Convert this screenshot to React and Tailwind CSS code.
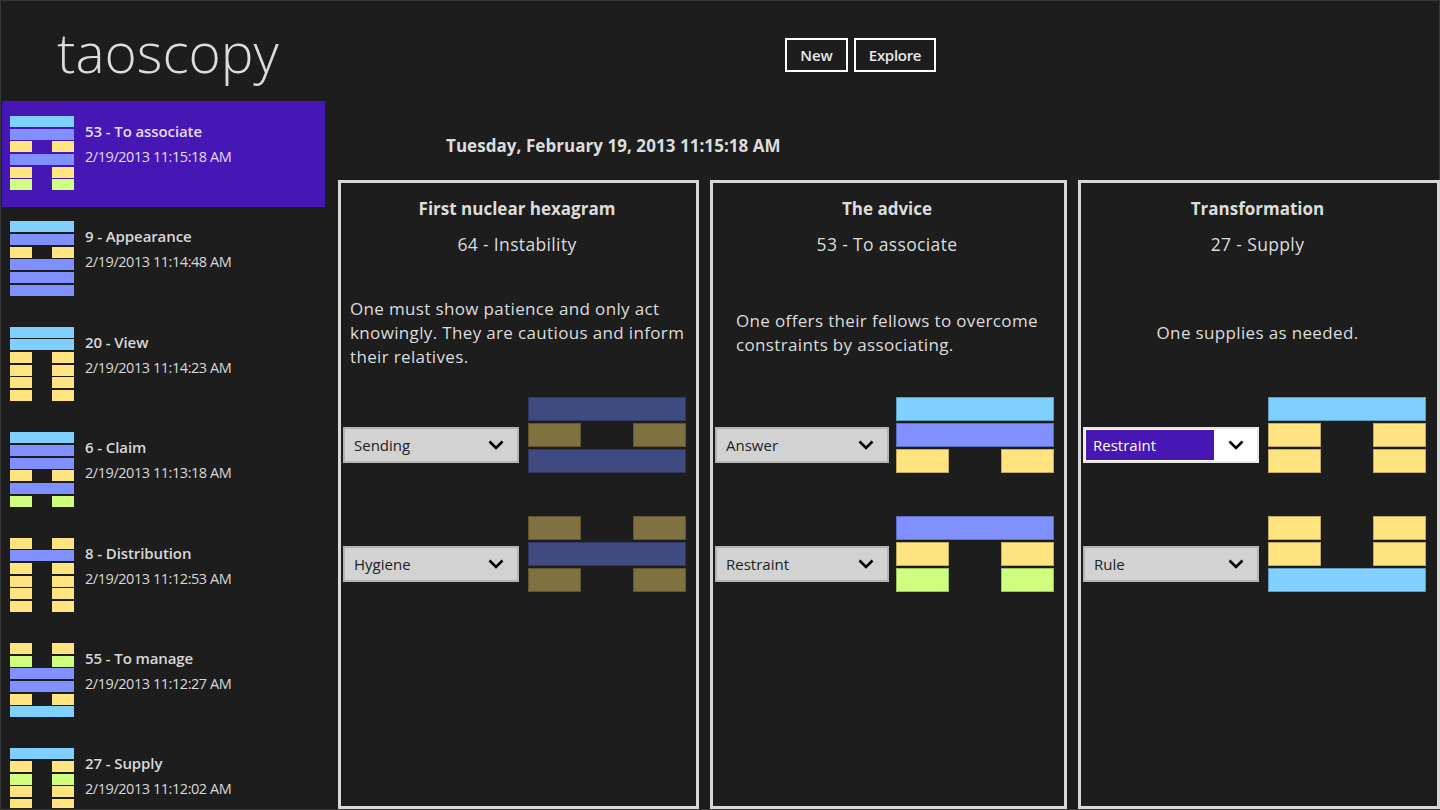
const BLUE = 'bg-[#80d0ff]'
const VIOLET = 'bg-[#8090ff]'
const YELLOW = 'bg-[#ffe480]'
const LIME = 'bg-[#d0ff80]'
const DIM_VIOLET = 'bg-[#3f4a80]'
const DIM_YELLOW = 'bg-[#807240]'

// each line: [colour, solid]
const c = (color) => [color, true]
const b = (color) => [color, false]

const history = [
  { title: '53 - To associate', time: '2/19/2013 11:15:18 AM', lines: [c(BLUE), c(VIOLET), b(YELLOW), c(VIOLET), b(YELLOW), b(LIME)], active: true },
  { title: '9 - Appearance', time: '2/19/2013 11:14:48 AM', lines: [c(BLUE), c(VIOLET), b(YELLOW), c(VIOLET), c(VIOLET), c(VIOLET)] },
  { title: '20 - View', time: '2/19/2013 11:14:23 AM', lines: [c(BLUE), c(BLUE), b(YELLOW), b(YELLOW), b(YELLOW), b(YELLOW)] },
  { title: '6 - Claim', time: '2/19/2013 11:13:18 AM', lines: [c(BLUE), c(VIOLET), c(VIOLET), b(YELLOW), c(VIOLET), b(LIME)] },
  { title: '8 - Distribution', time: '2/19/2013 11:12:53 AM', lines: [b(YELLOW), c(VIOLET), b(YELLOW), b(YELLOW), b(YELLOW), b(YELLOW)] },
  { title: '55 - To manage', time: '2/19/2013 11:12:27 AM', lines: [b(YELLOW), b(LIME), c(VIOLET), c(VIOLET), b(YELLOW), c(BLUE)] },
  { title: '27 - Supply', time: '2/19/2013 11:12:02 AM', lines: [c(BLUE), b(YELLOW), b(LIME), b(YELLOW), b(YELLOW), b(YELLOW)] },
]

function SmallLine({ color, solid }) {
  return (
    <div className="flex justify-between h-[11px]">
      {solid ? (
        <div className={`w-full ${color}`} />
      ) : (
        <>
          <div className={`w-[22px] ${color}`} />
          <div className={`w-[22px] ${color}`} />
        </>
      )}
    </div>
  )
}

function HistoryItem({ item }) {
  return (
    <div className={`flex h-[106px] mb-[-0.6px] ml-[2px] w-[323px] pl-[8px] pt-[15px] ${item.active ? 'bg-[#4617b4]' : ''}`}>
      <div className="flex flex-col gap-[1.67px] w-[64px]">
        {item.lines.map((l, i) => (
          <SmallLine key={i} color={l[0]} solid={l[1]} />
        ))}
      </div>
      <div className={`ml-[11px] pt-[5px] leading-[20px] ${item.active ? 'text-[#e4dcf6]' : 'text-[#d8d8d8]'}`}>
        <div className="text-[15px] font-semibold tracking-[-0.1px]">{item.title}</div>
        <div className="mt-[6px] text-[14.5px] tracking-[-0.45px]">{item.time}</div>
      </div>
    </div>
  )
}

function BigLine({ color, solid }) {
  return (
    <div className="flex justify-between h-[24px]">
      {solid ? (
        <div className={`w-full border border-black/25 ${color}`} />
      ) : (
        <>
          <div className={`w-[53px] border border-black/25 ${color}`} />
          <div className={`w-[53px] border border-black/25 ${color}`} />
        </>
      )}
    </div>
  )
}

function Trigram({ lines }) {
  return (
    <div className="flex flex-col gap-[2px] w-[158px]">
      {lines.map((l, i) => (
        <BigLine key={i} color={l[0]} solid={l[1]} />
      ))}
    </div>
  )
}

function Chevron() {
  return (
    <svg width="16" height="11" viewBox="0 0 16 11" className="shrink-0">
      <path d="M1.5 1.5 L8 8 L14.5 1.5" fill="none" stroke="#000" strokeWidth="2.6" />
    </svg>
  )
}

function Select({ label, focused, width }) {
  if (focused) {
    return (
      <div className={`flex items-center ${width} h-[36px] mt-[30px] border-[2px] border-[#e8e8e8] bg-white p-[1px] text-[15px]`}>
        <div className="flex items-center w-[128px] h-full bg-[#4617b4] pl-[7px] text-white">{label}</div>
        <div className="flex-1 flex justify-center pl-[1px]"><Chevron /></div>
      </div>
    )
  }
  return (
    <div className={`flex items-center justify-between ${width} h-[36px] mt-[30px] border-[2px] border-[#b4b4b4] bg-[#d2d2d2] pl-[9px] pr-[13px] text-[15px] text-[#222]`}>
      {label}
      <Chevron />
    </div>
  )
}

function Row({ label, lines, focused, gap, width, mt }) {
  return (
    <div className={`flex items-start ${mt}`}>
      <Select label={label} focused={focused} width={width} />
      <div className={gap}>
        <Trigram lines={lines} />
      </div>
    </div>
  )
}

function Panel({ width, heading, sub, text, textClass, rows, gap, selectWidth }) {
  return (
    <div className={`${width} h-[629px] border-[3px] border-[#d8d8d8] flex flex-col text-[#dcdcdc]`}>
      <div className="text-center font-bold text-[17px] leading-[22px] mt-[15px] pr-[3px]">{heading}</div>
      <div className="text-center text-[17.5px] leading-[22px] mt-[13px] pr-[3px] tracking-[0.35px]">{sub}</div>
      <div className={`h-[96px] mt-[30px] flex items-center text-[17px] leading-[24px] tracking-[0.35px] ${textClass}`}>{text}</div>
      <div className="pl-[2px] mt-[16px]">
        <Row {...rows[0]} gap={gap} width={selectWidth} />
        <Row {...rows[1]} gap={gap} width={selectWidth} mt="mt-[43px]" />
      </div>
    </div>
  )
}

export default function App() {
  return (
    <div className="w-[1440px] h-[810px] overflow-hidden bg-[#1d1d1d] shadow-[inset_0_0_0_1px_#383838] flex font-['Open_Sans',sans-serif]">
      <div className="w-[338px] shrink-0 h-[808px] overflow-hidden">
        <div className="h-[101px] pl-[57px] pt-[14px] text-[55px] leading-[75px] font-light text-[#dcdcdc]">taoscopy</div>
        <div>
          {history.map((item) => (
            <HistoryItem key={item.title} item={item} />
          ))}
        </div>
      </div>
      <div className="flex-1 min-w-0">
        <div className="h-[180px]">
          <div className="flex gap-[6px] pl-[447px] pt-[38px]">
            <div className="h-[34px] w-[63px] border-[2px] border-white flex items-center justify-center text-[15px] font-semibold text-[#e8e8e8]">New</div>
            <div className="h-[34px] w-[82px] border-[2px] border-white flex items-center justify-center text-[15px] font-semibold tracking-[-0.3px] text-[#e8e8e8]">Explore</div>
          </div>
          <div className="pl-[108px] mt-[62px] text-[17px] leading-[24px] font-bold tracking-[0.05px] text-[#dcdcdc]">Tuesday, February 19, 2013 11:15:18 AM</div>
        </div>
        <div className="flex gap-[11px]">
          <Panel
            width="w-[361px]"
            heading="First nuclear hexagram"
            sub="64 - Instability"
            text="One must show patience and only act knowingly. They are cautious and inform their relatives."
            textClass="pl-[9px] pr-[6px]"
            gap="ml-[9px]"
            selectWidth="w-[176px]"
            rows={[
              { label: 'Sending', lines: [c(DIM_VIOLET), b(DIM_YELLOW), c(DIM_VIOLET)] },
              { label: 'Hygiene', lines: [b(DIM_YELLOW), c(DIM_VIOLET), b(DIM_YELLOW)] },
            ]}
          />
          <Panel
            width="w-[357px]"
            heading="The advice"
            sub="53 - To associate"
            text="One offers their fellows to overcome constraints by associating."
            textClass="pl-[23px] pr-[8px]"
            gap="ml-[7px]"
            selectWidth="w-[174px]"
            rows={[
              { label: 'Answer', lines: [c(BLUE), c(VIOLET), b(YELLOW)] },
              { label: 'Restraint', lines: [c(VIOLET), b(YELLOW), b(LIME)] },
            ]}
          />
          <Panel
            width="w-[362px]"
            heading="Transformation"
            sub="27 - Supply"
            text="One supplies as needed."
            textClass="justify-center pr-[3px]"
            gap="ml-[9px]"
            selectWidth="w-[176px]"
            rows={[
              { label: 'Restraint', focused: true, lines: [c(BLUE), b(YELLOW), b(YELLOW)] },
              { label: 'Rule', lines: [b(YELLOW), b(YELLOW), c(BLUE)] },
            ]}
          />
        </div>
      </div>
    </div>
  )
}
